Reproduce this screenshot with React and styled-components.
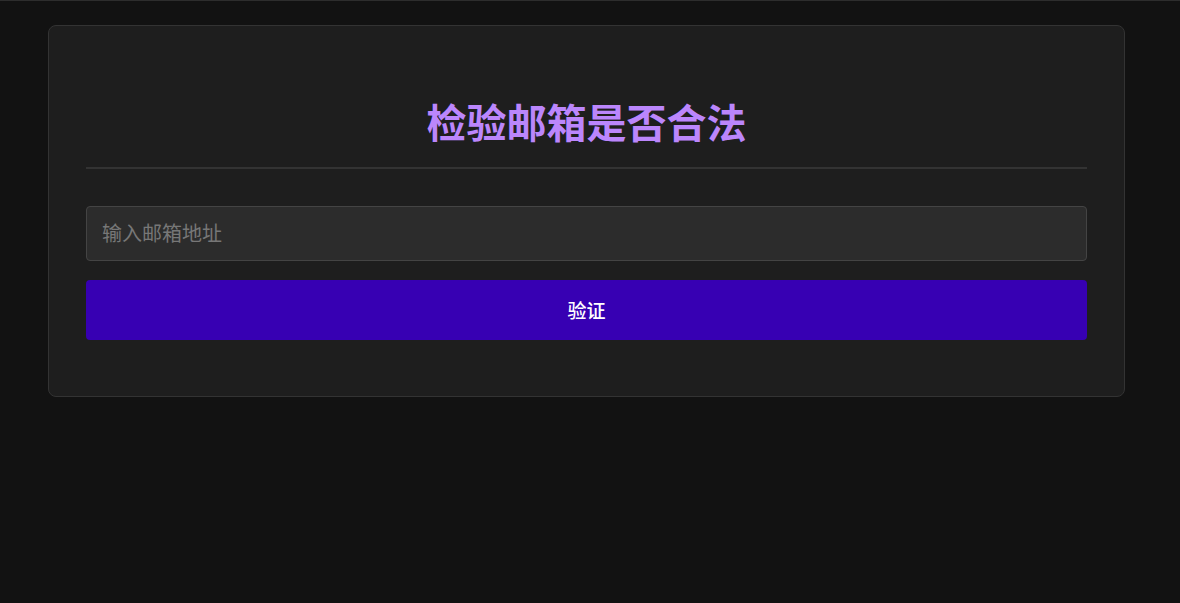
import React, { useState } from 'react';
import styled, { createGlobalStyle } from 'styled-components';

const GlobalStyle = createGlobalStyle`
    * {
        box-sizing: border-box;
    }
    html, body {
        margin: 0;
        padding: 0;
        background: #121212;
    }
    body {
        font-family: "Noto Sans", "Noto Sans CJK SC", sans-serif;
        color: #e0e0e0;
    }
`;

function App() {
    const [email, setEmail] = useState('');
    return (
        <Page>
            <GlobalStyle />
            <Card>
                <Title>检验邮箱是否合法</Title>
                <Form onSubmit={(e) => e.preventDefault()}>
                    <EmailInput
                        type="text"
                        placeholder="输入邮箱地址"
                        value={email}
                        onChange={(e) => setEmail(e.target.value)}
                    />
                    <SubmitButton type="submit">验证</SubmitButton>
                </Form>
            </Card>
        </Page>
    );
}

const Page = styled.div`
    min-height: 603px;
    border-top: 1px solid #2d2d2d;
    padding: 24px 0 0 48px;
`;

const Card = styled.section`
    width: 1077px;
    background: #1e1e1e;
    border: 1px solid #333333;
    border-radius: 8px;
    padding: 71px 37px 56px;
`;

const Title = styled.h1`
    margin: 0 0 37px;
    padding-bottom: 22px;
    border-bottom: 2px solid #333333;
    text-align: center;
    font-family: "Noto Sans CJK SC", sans-serif;
    font-size: 40px;
    line-height: 48px;
    font-weight: 700;
    color: #bb86fc;
`;

const Form = styled.form`
    display: flex;
    flex-direction: column;
    gap: 19px;
`;

const EmailInput = styled.input`
    width: 100%;
    height: 55px;
    padding: 0 15px 2px;
    background: #2c2c2c;
    border: 1px solid #444444;
    border-radius: 4px;
    color: #e0e0e0;
    font-family: "Noto Sans CJK SC", sans-serif;
    font-size: 20px;
    outline: none;

    &::placeholder {
        color: #777777;
    }
`;

const SubmitButton = styled.button`
    width: 100%;
    height: 60px;
    padding: 0 0 2px;
    background: #3700b3;
    border: none;
    border-radius: 4px;
    color: #ffffff;
    font-family: "Noto Sans CJK SC", sans-serif;
    font-size: 19px;
    font-weight: 500;
    cursor: pointer;
`;

export default App;
